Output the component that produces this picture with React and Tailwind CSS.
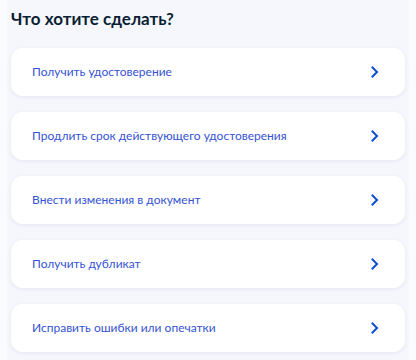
import React from 'react'

const items = [
  'Получить удостоверение',
  'Продлить срок действующего удостоверения',
  'Внести изменения в документ',
  'Получить дубликат',
  'Исправить ошибки или опечатки',
]

function Chevron() {
  return (
    <svg width="8" height="12" viewBox="0 0 8 12" fill="none">
      <path d="M1.5 1.5 L6 6 L1.5 10.5" stroke="#0d4cd3" strokeWidth="2" strokeLinecap="square" />
    </svg>
  )
}

export default function App() {
  return (
    <div className="min-h-[360px] w-[416px] bg-[#fafbfe] px-[7px]" style={{ fontFamily: 'Lato, "Noto Sans", sans-serif' }}>
      <div className="min-h-[360px] bg-[#f5f7fc] px-1 pt-[7px] pb-2">
        {/* Title */}
        <h2 className="text-[17px] font-bold leading-[24px] text-[#0b1f33]">Что хотите сделать?</h2>

        {/* Options */}
        <div className="mt-[17px] flex flex-col gap-4">
          {items.map((text) => (
            <button
              key={text}
              className="flex h-12 w-full items-center justify-between rounded-xl bg-white pl-[21px] pr-[26px] text-left shadow-[0_1px_4px_rgba(14,35,90,0.08)]"
            >
              <span className="text-[12px] leading-4 text-[#3553d4]">{text}</span>
              <Chevron />
            </button>
          ))}
        </div>
      </div>
    </div>
  )
}
